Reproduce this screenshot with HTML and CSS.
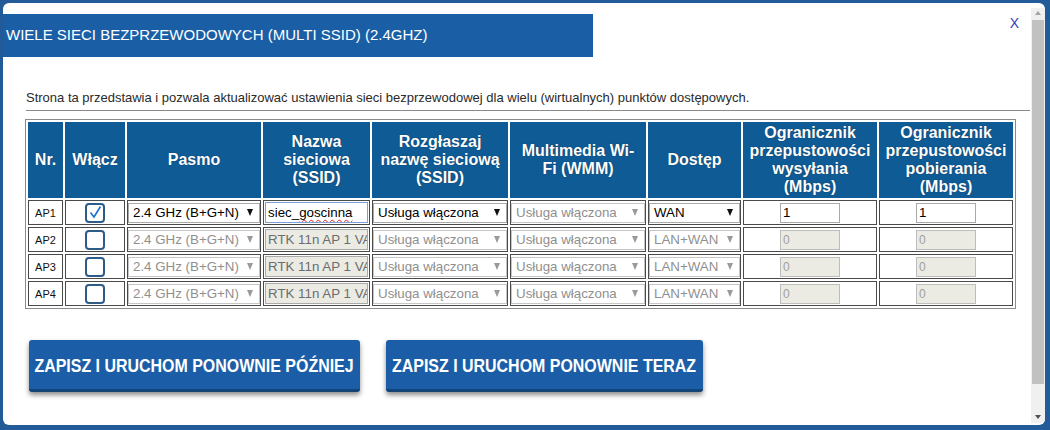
FILE: index.html
```html
<!DOCTYPE html>
<html lang="pl">
<head>
<meta charset="utf-8">
<title>Multi SSID</title>
<link rel="stylesheet" href="styles.css">
</head>
<body>
<div class="dialog">
  <div class="main">
    <div class="topbar">
      <div class="title">WIELE SIECI BEZPRZEWODOWYCH (MULTI SSID) (2.4GHZ)</div>
      <div class="close">X</div>
    </div>
    <p class="desc">Strona ta przedstawia i pozwala aktualizować ustawienia sieci bezprzewodowej dla wielu (wirtualnych) punktów dostępowych.</p>
    <div class="rule"></div>
    <table class="grid">
      <thead>
        <tr>
          <th class="c-nr">Nr.</th>
          <th class="c-on">Włącz</th>
          <th class="c-band">Pasmo</th>
          <th class="c-ssid">Nazwa<br>sieciowa<br>(SSID)</th>
          <th class="c-bc">Rozgłaszaj<br>nazwę sieciową<br>(SSID)</th>
          <th class="c-wmm">Multimedia Wi-<br>Fi (WMM)</th>
          <th class="c-acc">Dostęp</th>
          <th class="c-up">Ogranicznik<br>przepustowości<br>wysyłania<br>(Mbps)</th>
          <th class="c-down">Ogranicznik<br>przepustowości<br>pobierania<br>(Mbps)</th>
        </tr>
      </thead>
      <tbody>
        <tr>
          <td class="ap">AP1</td>
          <td><span class="chk"><svg viewBox="0 0 15 15" width="15" height="15"><polyline points="2.5,7.5 6,12 12.5,1.5" fill="none" stroke="#1f6fd0" stroke-width="1.6"/></svg></span></td>
          <td><div class="sel"><span>2.4 GHz (B+G+N)</span><i class="arr"></i></div></td>
          <td><div class="txt focus">siec_<span class="spell">goscinna</span></div></td>
          <td><div class="sel"><span>Usługa włączona</span><i class="arr"></i></div></td>
          <td><div class="sel off"><span>Usługa włączona</span><i class="arr"></i></div></td>
          <td><div class="sel"><span>WAN</span><i class="arr"></i></div></td>
          <td><div class="num">1</div></td>
          <td><div class="num">1</div></td>
        </tr>
        <tr>
          <td class="ap">AP2</td>
          <td><span class="chk"></span></td>
          <td><div class="sel off"><span>2.4 GHz (B+G+N)</span><i class="arr"></i></div></td>
          <td><div class="txt off">RTK 11n AP 1 VAP1</div></td>
          <td><div class="sel off"><span>Usługa włączona</span><i class="arr"></i></div></td>
          <td><div class="sel off"><span>Usługa włączona</span><i class="arr"></i></div></td>
          <td><div class="sel off"><span>LAN+WAN</span><i class="arr"></i></div></td>
          <td><div class="num off">0</div></td>
          <td><div class="num off">0</div></td>
        </tr>
        <tr>
          <td class="ap">AP3</td>
          <td><span class="chk"></span></td>
          <td><div class="sel off"><span>2.4 GHz (B+G+N)</span><i class="arr"></i></div></td>
          <td><div class="txt off">RTK 11n AP 1 VAP2</div></td>
          <td><div class="sel off"><span>Usługa włączona</span><i class="arr"></i></div></td>
          <td><div class="sel off"><span>Usługa włączona</span><i class="arr"></i></div></td>
          <td><div class="sel off"><span>LAN+WAN</span><i class="arr"></i></div></td>
          <td><div class="num off">0</div></td>
          <td><div class="num off">0</div></td>
        </tr>
        <tr>
          <td class="ap">AP4</td>
          <td><span class="chk"></span></td>
          <td><div class="sel off"><span>2.4 GHz (B+G+N)</span><i class="arr"></i></div></td>
          <td><div class="txt off">RTK 11n AP 1 VAP3</div></td>
          <td><div class="sel off"><span>Usługa włączona</span><i class="arr"></i></div></td>
          <td><div class="sel off"><span>Usługa włączona</span><i class="arr"></i></div></td>
          <td><div class="sel off"><span>LAN+WAN</span><i class="arr"></i></div></td>
          <td><div class="num off">0</div></td>
          <td><div class="num off">0</div></td>
        </tr>
      </tbody>
    </table>
    <div class="actions">
      <button class="btn btn-later"><span class="btn-label">ZAPISZ I URUCHOM PONOWNIE PÓŹNIEJ</span></button>
      <button class="btn btn-now"><span class="btn-label">ZAPISZ I URUCHOM PONOWNIE TERAZ</span></button>
    </div>
  </div>
  <div class="scrollbar">
    <i class="sb-up"></i>
    <div class="sb-thumb"></div>
    <i class="sb-down"></i>
  </div>
</div>
</body>
</html>
```
FILE: styles.css
```css
html, body {
  margin: 0;
  height: 100%;
}
body {
  background: #235a98;
  font-family: "Liberation Sans", Arial, sans-serif;
  overflow: hidden;
}
.dialog {
  margin: 3px 5px 0 3px;
  height: 422px;
  background: #fff;
  border-radius: 6px;
  display: flex;
  overflow: hidden;
}
.main {
  flex: 1;
  min-width: 0;
  padding-top: 11px;
}
.topbar {
  display: flex;
  justify-content: space-between;
  align-items: flex-start;
}
.title {
  width: 587px;
  height: 43px;
  padding-left: 3px;
  background: #1a5fa6;
  color: #fff;
  font-size: 15px;
  line-height: 41px;
  white-space: nowrap;
}
.close {
  color: #3a3ab8;
  font-size: 14px;
  line-height: 14px;
  margin: 2px 12px 0 0;
}
.desc {
  margin: 33px 0 0 23px;
  font-size: 13px;
  line-height: 15px;
  color: #2a2a2a;
}
.rule {
  margin: 5px 1px 0 23px;
  border-top: 1px solid #8a8a8a;
}
.grid {
  margin: 8px 0 0 22px;
  border: 1px solid #8a8a8a;
  border-spacing: 2px;
  table-layout: fixed;
  width: 991px;
}
.grid th, .grid td {
  box-sizing: border-box;
  text-align: center;
  vertical-align: middle;
}
.grid th {
  height: 76px;
  padding: 0 2px;
  background: #0f5b95;
  border: 1px solid #0f5b95;
  color: #fff;
  font-size: 16px;
  font-weight: bold;
  line-height: 18px;
  text-shadow: 0 0 1px #062c4d;
}
.c-nr { width: 35px; }
.c-on { width: 60px; }
.c-band { width: 134px; }
.c-ssid { width: 107px; }
.c-bc { width: 136px; }
.c-wmm { width: 136px; }
.c-acc { width: 93px; }
.c-up { width: 134px; }
.c-down { width: 134px; }
.grid td {
  height: 25px;
  padding: 0;
  border: 1px solid #4a4a4a;
}
.ap {
  font-size: 11px;
  color: #111;
}
.chk {
  display: flex;
  align-items: center;
  justify-content: center;
  width: 20px;
  height: 20px;
  box-sizing: border-box;
  margin: 0 auto;
  border: 2px solid #2f5b87;
  border-radius: 4px;
  background: #fff;
}
.chk svg {
  display: block;
}
.sel {
  display: flex;
  align-items: center;
  justify-content: space-between;
  height: 20px;
  box-sizing: border-box;
  border: 1px solid #a9a9a9;
  padding: 0 6px 0 4px;
  background: #fff;
  color: #000;
  font-size: 13.333px;
  white-space: nowrap;
}
.arr {
  width: 0;
  height: 0;
  border-style: solid;
  border-width: 7px 3.5px 0 3.5px;
  border-color: #111 transparent transparent transparent;
}
.sel.off {
  color: #8f8f8f;
  border-color: #c6c6c6;
}
.sel.off .arr {
  border-top-color: #9a9a9a;
}
.txt {
  height: 21px;
  box-sizing: border-box;
  margin: 0 1px;
  border: 1px solid #a9a9a9;
  padding: 0 2px;
  font-size: 13.333px;
  line-height: 19px;
  text-align: left;
  white-space: nowrap;
  overflow: hidden;
  color: #000;
}
.txt.focus {
  border-color: #7b9fd6;
}
.txt.off {
  background: #ebebe4;
  color: #6d6d6d;
}
.spell {
  text-decoration: underline wavy #e02020;
  text-decoration-thickness: 1px;
  text-underline-offset: 2px;
  text-decoration-skip-ink: none;
}
.num {
  width: 60px;
  height: 20px;
  box-sizing: border-box;
  margin: 0 auto;
  border: 1px solid #a9a9a9;
  padding: 0 2px;
  font-size: 13.333px;
  line-height: 18px;
  text-align: left;
  color: #000;
}
.num.off {
  background: #ebebe4;
  color: #a0a0a0;
  border-color: #bdbdbd;
  font-size: 12px;
}
.actions {
  display: flex;
  gap: 26px;
  margin: 31px 0 0 26px;
}
.btn {
  display: flex;
  justify-content: center;
  align-items: center;
  height: 52px;
  padding: 3px 0 0;
  box-sizing: border-box;
  background: #1b5ea7;
  color: #fff;
  border: none;
  border-bottom: 3px solid #124478;
  border-radius: 3px;
  box-shadow: 0 3px 5px rgba(0, 0, 0, 0.45);
  font-family: "Liberation Sans", Arial, sans-serif;
  font-weight: bold;
  font-size: 19px;
  white-space: nowrap;
}
.btn-later { width: 331px; }
.btn-now { width: 317px; }
.btn-label {
  display: inline-block;
  flex: none;
  transform: scaleX(0.84);
  transform-origin: center;
}
.scrollbar {
  width: 14px;
  margin: 5px 0 2px;
  background: #f0f0f0;
  display: flex;
  flex-direction: column;
  align-items: center;
}
.sb-up {
  margin-top: 3px;
  width: 0;
  height: 0;
  border-style: solid;
  border-width: 0 3.5px 4px 3.5px;
  border-color: transparent transparent #a3a3a3 transparent;
}
.sb-thumb {
  margin-top: 5px;
  width: 12px;
  height: 364px;
  background: #c1c1c1;
}
.sb-down {
  margin-top: 31px;
  width: 0;
  height: 0;
  border-style: solid;
  border-width: 4px 3.5px 0 3.5px;
  border-color: #505050 transparent transparent transparent;
}
```
